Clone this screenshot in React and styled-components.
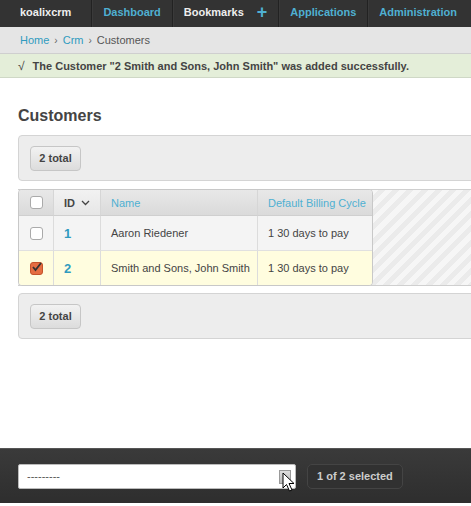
import React from 'react';
import styled, { createGlobalStyle } from 'styled-components';

const GlobalStyle = createGlobalStyle`
  html, body {
    margin: 0;
    padding: 0;
    overflow: hidden;
    background: #fff;
    font-family: "Liberation Sans", Arial, sans-serif;
    font-size: 11px;
    color: #444;
  }
`;

const Page = styled.div`
  width: 560px;
  min-height: 506px;
  display: flex;
  flex-direction: column;
`;

const Header = styled.div`
  height: 27px;
  background: #333;
  display: flex;
  align-items: stretch;
`;

const NavItem = styled.div`
  display: flex;
  align-items: center;
  padding: ${p => (p.$brand ? '0 20px 3px 20px' : '0 11px 3px')};
  border-left: ${p => (p.$brand ? 'none' : '1px solid #222')};
  box-shadow: ${p => (p.$brand ? 'none' : 'inset 1px 0 0 #3a3a3a')};
  font-weight: bold;
  font-size: 11px;
  line-height: 14px;
  color: ${p => (p.$link ? '#4fb0d2' : '#eee')};
  gap: 13px;
`;

const Plus = styled.span`
  color: #4fb0d2;
  font-size: 18px;
  font-weight: bold;
  line-height: 14px;
`;

const Breadcrumbs = styled.div`
  height: 27px;
  box-sizing: border-box;
  background: #e5e5e5;
  border-bottom: 1px solid #cfcfcf;
  display: flex;
  align-items: center;
  padding: 0 20px;
  font-size: 11px;
  color: #555;
`;

const Crumb = styled.a`
  color: ${p => (p.$current ? '#555' : '#309bbf')};
  text-decoration: none;
`;

const Sep = styled.span`
  margin: 0 5px;
  color: #666;
  font-size: 10px;
`;

const Message = styled.div`
  height: 24px;
  box-sizing: border-box;
  background: #e4eed9;
  border-bottom: 1px solid #cfd8c6;
  display: flex;
  align-items: center;
  padding: 0 18px;
  font-weight: bold;
  font-size: 11px;
  color: #444;
  gap: 8px;
`;

const Tick = styled.span`
  font-weight: normal;
  font-size: 12px;
`;

const Content = styled.div`
  padding: 0 0 0 18px;
`;

const Title = styled.h1`
  margin: 28px 0 9px;
  font-size: 16px;
  line-height: 20px;
  font-weight: bold;
  color: #444;
`;

const Toolbar = styled.div`
  height: 46px;
  box-sizing: border-box;
  background: #ededed;
  border: 1px solid #d4d4d4;
  border-radius: 4px;
  display: flex;
  align-items: center;
  padding: 0 11px;
  margin-bottom: ${p => p.$mb || 0}px;
`;

const TotalButton = styled.div`
  height: 25px;
  box-sizing: border-box;
  width: 51px;
  display: flex;
  align-items: center;
  justify-content: center;
  border: 1px solid #c6c6c6;
  border-radius: 4px;
  background: linear-gradient(#f2f2f2, #dcdcdc);
  font-weight: bold;
  font-size: 11px;
  color: #444;
`;

const Results = styled.div`
  display: flex;
  margin-bottom: 7px;
  background: repeating-linear-gradient(
    135deg,
    #f6f6f6 0 5px,
    #ebebeb 5px 10px
  );
  border-top: 1px solid #cfcfcf;
  border-bottom: 1px solid #cfcfcf;
`;

const Table = styled.table`
  border-collapse: separate;
  border-spacing: 0;
  table-layout: fixed;
  width: 355px;
  border: 1px solid #c8c8c8;
  border-radius: 4px;
  margin: -1px 0;
  overflow: hidden;
  background: #f4f4f4;
  font-size: 11px;
`;

const Th = styled.th`
  height: 26px;
  padding: 0 0 0 10px;
  text-align: left;
  font-weight: ${p => (p.$sorted ? 'bold' : 'normal')};
  color: ${p => (p.$sorted ? '#444' : '#4fb0d2')};
  background: ${p =>
    p.$sorted ? 'linear-gradient(#f2f2f2, #e6e6e6)' : 'linear-gradient(#e8e8e8, #dadada)'};
  border-left: ${p => (p.$first ? 'none' : '1px solid #d6d6d6')};
  border-bottom: 1px solid #cfcfcf;
  width: ${p => p.$w}px;
  box-sizing: border-box;
  white-space: nowrap;
  overflow: hidden;
`;

const Td = styled.td`
  height: 34px;
  padding: 0 0 0 10px;
  border-left: ${p => (p.$first ? 'none' : '1px solid #dcdcdc')};
  border-top: ${p => (p.$top ? '1px solid #e0e0e0' : 'none')};
  background: ${p => (p.$selected ? '#fffddf' : '#f4f4f4')};
  color: #444;
  white-space: nowrap;
  overflow: hidden;
`;

const IdLink = styled.a`
  color: #309bbf;
  font-weight: bold;
  font-size: 13px;
  text-decoration: none;
`;

const SortLabel = styled.span`
  display: inline-flex;
  align-items: center;
  gap: 6px;
`;

const Box = styled.span`
  display: block;
  width: 13px;
  height: 13px;
  box-sizing: border-box;
  border-radius: 3px;
  border: 1px solid ${p => (p.$checked ? '#c4532b' : '#aaa')};
  background: ${p => (p.$checked ? '#e56d42' : '#fff')};
  position: relative;
  margin-left: 1px;
`;

const Footer = styled.div`
  margin-top: auto;
  margin-bottom: 3px;
  height: 55px;
  box-sizing: border-box;
  background: linear-gradient(#3a3a3a, #2e2e2e);
  border-top: 1px solid #555;
  display: flex;
  align-items: center;
  padding: 0 18px;
  gap: 11px;
`;

const Select = styled.div`
  position: relative;
  width: 278px;
  height: 25px;
  box-sizing: border-box;
  background: #fff;
  border: 1px solid #bbb;
  border-radius: 2px;
  display: flex;
  align-items: center;
  padding: 0 8px;
  font-size: 11px;
  color: #555;
`;

const SelectArrow = styled.span`
  position: absolute;
  right: 4px;
  top: 5px;
  width: 12px;
  height: 14px;
  background: linear-gradient(#ddd, #bbb);
  border: 1px solid #999;
  box-sizing: border-box;
`;

const Cursor = styled.svg`
  position: absolute;
  right: -3px;
  top: 7px;
`;

const Selected = styled.div`
  height: 25px;
  box-sizing: border-box;
  padding: 0 9px;
  display: flex;
  align-items: center;
  border: 1px solid #444;
  border-radius: 5px;
  background: #313131;
  color: #ccc;
  font-weight: bold;
  font-size: 11px;
`;

const Check = ({ checked }) => (
  <Box $checked={checked}>
    {checked && (
      <svg width="11" height="11" viewBox="0 0 11 11" style={{ position: 'absolute', left: 0, top: -1 }}>
        <path d="M2 5 L4.5 8 L10 1" fill="none" stroke="#333" strokeWidth="1.8" />
      </svg>
    )}
  </Box>
);

const rows = [
  { id: 1, name: 'Aaron Riedener', cycle: '1 30 days to pay', selected: false },
  { id: 2, name: 'Smith and Sons, John Smith', cycle: '1 30 days to pay', selected: true },
];

export default function App() {
  return (
    <Page>
      <GlobalStyle />
      <Header>
        <NavItem $brand>koalixcrm</NavItem>
        <NavItem $link>Dashboard</NavItem>
        <NavItem>
          Bookmarks <Plus>+</Plus>
        </NavItem>
        <NavItem $link>Applications</NavItem>
        <NavItem $link>Administration</NavItem>
      </Header>
      <Breadcrumbs>
        <Crumb href="#">Home</Crumb>
        <Sep>›</Sep>
        <Crumb href="#">Crm</Crumb>
        <Sep>›</Sep>
        <Crumb $current>Customers</Crumb>
      </Breadcrumbs>
      <Message>
        <Tick>√</Tick>
        The Customer "2 Smith and Sons, John Smith" was added successfully.
      </Message>
      <Content>
        <Title>Customers</Title>
        <Toolbar $mb={8}>
          <TotalButton>2 total</TotalButton>
        </Toolbar>
        <Results>
          <Table>
            <thead>
              <tr>
                <Th $first $w={34}>
                  <Check />
                </Th>
                <Th $sorted $w={47}>
                  <SortLabel>
                    ID
                    <svg width="9" height="6" viewBox="0 0 9 6">
                      <path d="M1 1 L4.5 4.5 L8 1" fill="none" stroke="#444" strokeWidth="1.3" />
                    </svg>
                  </SortLabel>
                </Th>
                <Th $w={157}>Name</Th>
                <Th $w={115}>Default Billing Cycle</Th>
              </tr>
            </thead>
            <tbody>
              {rows.map((r, i) => (
                <tr key={r.id}>
                  <Td $first $top={i > 0} $selected={r.selected}>
                    <Check checked={r.selected} />
                  </Td>
                  <Td $top={i > 0} $selected={r.selected}>
                    <IdLink href="#">{r.id}</IdLink>
                  </Td>
                  <Td $top={i > 0} $selected={r.selected}>{r.name}</Td>
                  <Td $top={i > 0} $selected={r.selected}>{r.cycle}</Td>
                </tr>
              ))}
            </tbody>
          </Table>
        </Results>
        <Toolbar>
          <TotalButton>2 total</TotalButton>
        </Toolbar>
      </Content>
      <Footer>
        <Select>
          ---------
          <SelectArrow />
          <Cursor width="16" height="22" viewBox="0 0 16 22">
            <path d="M1 1 L1 16 L4.5 12.5 L7.5 19 L10 18 L7 11.5 L12 11.5 Z" fill="#fff" stroke="#000" strokeWidth="1" />
          </Cursor>
        </Select>
        <Selected>1 of 2 selected</Selected>
      </Footer>
    </Page>
  );
}
